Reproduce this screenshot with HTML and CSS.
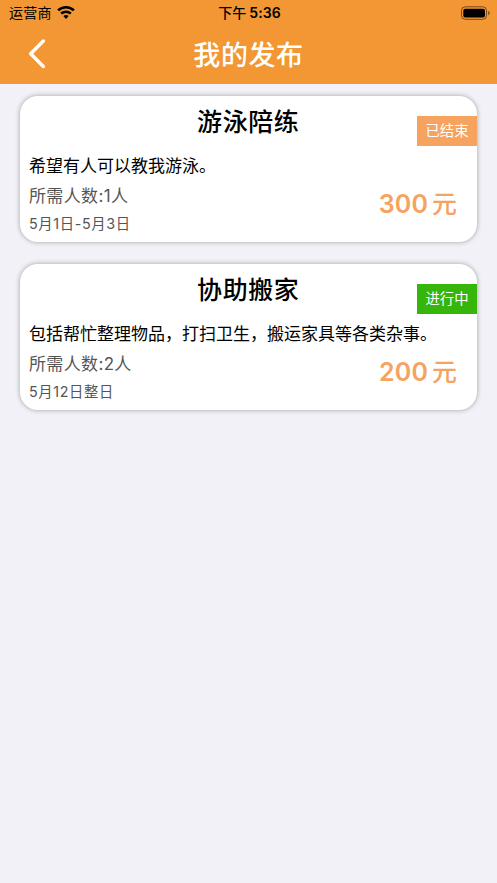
FILE: index.html
```html
<!DOCTYPE html>
<html lang="zh-CN">
<head>
<meta charset="utf-8">
<title>我的发布</title>
<link rel="stylesheet" href="styles.css">
</head>
<body>
<header class="top">
  <div class="status">
    <div class="carrier"><span class="carrier-name">运营商</span>
      <svg class="wifi" viewBox="0 0 18 13"><path d="M9 0C5.600 0 2.500 1.300.2 3.500L2 5.300a10 10 0 0 1 14 0l1.800-1.800A12.700 12.700 0 0 0 9 0Z"/><path d="M9 4.500c-2.200 0-4.200.8-5.700 2.200l1.800 1.800a5.600 5.600 0 0 1 7.800 0l1.800-1.800A8.300 8.300 0 0 0 9 4.500Z"/><path d="M9 8.900c-1 0-1.900.4-2.600 1L9 12.900l2.600-3c-.7-.6-1.600-1-2.600-1Z"/></svg>
    </div>
    <div class="clock"><span class="ampm">下午</span><span class="time">5:36</span></div>
    <svg class="battery" viewBox="0 0 30 14"><rect x="1.500" y=".8" width="25" height="12.500" rx="3.800" fill="none" stroke="#000" stroke-opacity=".5"/><rect x="3.300" y="2.700" width="21.700" height="8.800" rx="2"/><path d="M28.300 4.900v4.400c.8-.4 1.300-1.200 1.300-2.200s-.5-1.800-1.300-2.200Z" fill-opacity=".6"/></svg>
  </div>
  <nav class="nav">
    <svg class="back" viewBox="0 0 18 30"><path d="M15.300 2 2.700 14.800l12.600 12.700"/></svg>
    <h1 class="title">我的发布</h1>
  </nav>
</header>
<main class="list">
  <article class="card">
    <h2 class="card-title">游泳陪练</h2>
    <p class="desc">希望有人可以教我游泳。</p>
    <p class="people">所需人数:1人</p>
    <p class="date">5月1日-5月3日</p>
    <span class="badge">已结束</span>
    <div class="price"><span class="amount">300</span><span class="unit">元</span></div>
  </article>
  <article class="card">
    <h2 class="card-title">协助搬家</h2>
    <p class="desc">包括帮忙整理物品，打扫卫生，搬运家具等各类杂事。</p>
    <p class="people">所需人数:2人</p>
    <p class="date">5月12日整日</p>
    <span class="badge active">进行中</span>
    <div class="price"><span class="amount">200</span><span class="unit">元</span></div>
  </article>
</main>
</body>
</html>
```

FILE: styles.css
```css
* { box-sizing: border-box; }
body { margin: 0; min-height: 883px; background: #f2f1f7; color: #000; font-family: Inter, "Noto Sans CJK SC", sans-serif; }
h1, h2, p { margin: 0; white-space: nowrap; }
.top { height: 84px; background: #f29733; }
.status { height: 26px; display: grid; grid-template-columns: 1fr auto 1fr; align-items: center; padding: 0 7px 0 9px; }
.carrier { display: flex; align-items: center; gap: 5px; font-size: 14px; line-height: 26px; letter-spacing: .3px; }
.wifi { width: 18px; height: 13px; margin-top: -1px; }
.clock { display: flex; gap: 3px; font-size: 14px; font-weight: 600; line-height: 26px; letter-spacing: .1px; }
.ampm { font-weight: 500; }
.battery { width: 30px; height: 14px; margin-top: -1px; justify-self: end; }
.nav { height: 58px; display: grid; grid-template-columns: 1fr auto 1fr; align-items: center; padding: 0 28px; color: #fff; }
.back { width: 18px; height: 30px; margin-top: -2px; fill: none; stroke: #fff; stroke-width: 3.500; stroke-linecap: round; stroke-linejoin: round; }
.title { padding-top: 2px; font-size: 27px; line-height: 40px; font-weight: 500; letter-spacing: .6px; }
.list { padding: 12px 20px 12px 19.500px; display: grid; gap: 22px; }
.card { position: relative; height: 146px; padding: 5px 9.500px; border-radius: 18px; background: #fff; box-shadow: 0 0 5px rgba(0,0,0,.35); }
.card-title { text-align: center; font-size: 25px; line-height: 42px; font-weight: 500; letter-spacing: .6px; }
.desc { margin-top: 8px; font-size: 17px; line-height: 30px; }
.people { font-size: 17px; line-height: 30px; letter-spacing: .35px; color: #555; }
.date { font-size: 14.300px; line-height: 27px; letter-spacing: .65px; margin-top: -1px; color: #555; }
.badge { position: absolute; right: 0; top: 20px; width: 60px; height: 30px; background: #f5a35e; color: #fff; text-align: center; font-size: 14.400px; line-height: 30px; }
.active { background: #36b50b; }
.price { position: absolute; right: 20px; top: 89.500px; display: flex; gap: 4px; align-items: center; color: #f5a35e; font-size: 25px; line-height: 36px; font-weight: 600; }
.amount { letter-spacing: .1px; }
.unit { font-weight: 500; }
```
